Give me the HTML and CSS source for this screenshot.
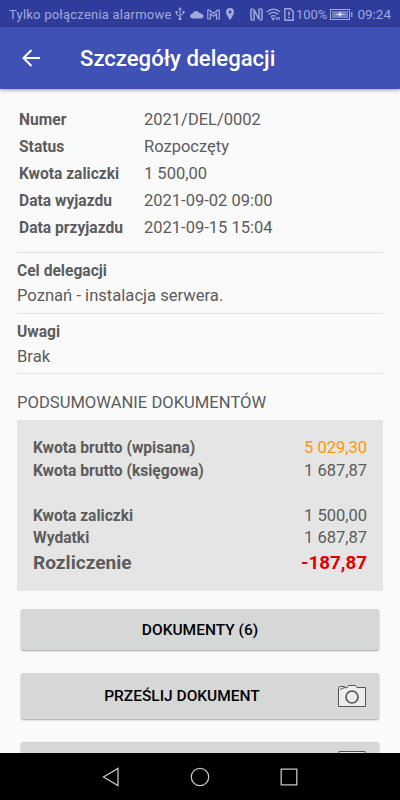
FILE: index.html
```html
<!DOCTYPE html>
<html lang="pl">

<head>
    <meta charset="UTF-8">
    <meta name="viewport" content="width=device-width, initial-scale=1.0">
    <title>Szczegóły delegacji</title>
    <link rel="stylesheet" href="styles.css">
</head>

<body>
    <div class="statusbar">
        <span class="carrier">Tylko połączenia alarmowe</span>
        <svg class="ico-usb" width="10" height="14" viewBox="0 0 10 14" fill="none" stroke="currentColor">
            <path d="M5 2v9M1.500 5v2.500L5 9.500M8.500 5v1.500L5 8.500" />
            <path d="M5 0L3.300 2.800h3.400zM.5 4h2v2h-2zM7.500 4h2v2h-2z" fill="currentColor" stroke="none" />
            <circle cx="5" cy="11.800" r="1.500" fill="currentColor" stroke="none" />
        </svg>
        <svg class="ico-cloud" width="14" height="9" viewBox="0 0 14 9" fill="currentColor">
            <path d="M2.500 8.500a2.400 2.400 0 0 1 0-4.800A3.800 3.800 0 0 1 9.500 3a3 3 0 0 1 2 .8 2.400 2.400 0 0 1 .3 4.700z" />
        </svg>
        <svg class="ico-mail" width="13" height="11" viewBox="0 0 13 11" fill="none" stroke="currentColor" stroke-width="1.200">
            <path d="M.8 10V1.200h1.500L6.500 4.500l4.200-3.300h1.500V10H9.500V5L6.500 7.300 3.500 5v5z" />
        </svg>
        <svg class="ico-pin" width="8" height="12" viewBox="0 0 8 12" fill="currentColor">
            <path fill-rule="evenodd" d="M4 0a4 4 0 0 1 4 4c0 3-4 8-4 8S0 7 0 4a4 4 0 0 1 4-4zm0 2.600a1.400 1.400 0 1 0 0 2.800 1.400 1.400 0 0 0 0-2.800z" />
        </svg>
        <div class="status-right">
            <svg class="ico-nfc" width="13" height="13" viewBox="0 0 13 13" fill="none" stroke="currentColor">
                <path d="M3.200 1H2Q1 1 1 2v9q0 1 1 1h1.200M9.800 1H11q1 0 1 1v9q0 1-1 1H9.800" stroke-width="1.500" />
                <path d="M4 12.500V1.500l5 10V.5" stroke-width="1.500" />
            </svg>
            <svg class="ico-wifi" width="15" height="13" viewBox="0 0 15 13" fill="none" stroke="currentColor" stroke-width="1.300">
                <path d="M.7 4Q7.500-1.800 14.300 4M2.800 6.500Q7.500 2.300 12.200 6.500M4.800 8.800Q7.500 6.600 9.500 8.300" />
                <path d="M6.300 10.500h1.800L7.200 11.700zM10.800 9v3M13 9v3" fill="currentColor" />
            </svg>
            <svg class="ico-sim" width="10" height="13" viewBox="0 0 10 13" fill="none" stroke="currentColor" stroke-width="1.400">
                <path d="M.8.800h5.700L9.200 3.500v8.700H.8z" />
                <path d="M5 3.500v4M5 8.800v1.500" stroke-width="1.600" />
            </svg>
            <span class="percent">100%</span>
            <svg class="ico-battery" width="23" height="11" viewBox="0 0 23 11" fill="none" stroke="currentColor">
                <rect x=".5" y=".5" width="19" height="10" />
                <rect x="2" y="2" width="16" height="7" fill="currentColor" stroke="none" opacity=".6" />
                <path d="M21.800 3v5" stroke-width="1.300" />
                <path d="M5 5.500l4-.9.800-1.800 1.700 1.900 4 .3-4.500 1.100-.8 1.900-1.700-2z" fill="#dfe2f5" stroke="none" />
            </svg>
            <span class="clock">09:24</span>
        </div>
    </div>

    <header class="appbar">
        <svg class="back" width="18" height="18" viewBox="0 0 18 18" fill="none" stroke="#fff" stroke-width="2">
            <path d="M18 9H1.500M9.500 1L1.500 9l8 8" />
        </svg>
        <h1>Szczegóły delegacji</h1>
    </header>

    <main>
        <dl class="details">
            <dt>Numer</dt>
            <dd>2021/DEL/0002</dd>
            <dt>Status</dt>
            <dd>Rozpoczęty</dd>
            <dt>Kwota zaliczki</dt>
            <dd>1 500,00</dd>
            <dt>Data wyjazdu</dt>
            <dd>2021-09-02 09:00</dd>
            <dt>Data przyjazdu</dt>
            <dd>2021-09-15 15:04</dd>
        </dl>

        <section class="note">
            <h2>Cel delegacji</h2>
            <p>Poznań - instalacja serwera.</p>
        </section>
        <section class="note">
            <h2>Uwagi</h2>
            <p>Brak</p>
        </section>

        <h3 class="summary-title">PODSUMOWANIE DOKUMENTÓW</h3>
        <div class="summary">
            <div class="row"><b>Kwota brutto (wpisana)</b><span class="orange">5 029,30</span></div>
            <div class="row"><b>Kwota brutto (księgowa)</b><span>1 687,87</span></div>
            <div class="row gap"><b>Kwota zaliczki</b><span>1 500,00</span></div>
            <div class="row"><b>Wydatki</b><span>1 687,87</span></div>
            <div class="row total"><b>Rozliczenie</b><span>-187,87</span></div>
        </div>

        <button type="button" class="btn">DOKUMENTY (6)</button>
        <button type="button" class="btn btn-photo">
            <span>PRZEŚLIJ DOKUMENT</span>
            <svg width="28" height="22" viewBox="0 0 28 22" fill="#eceeed" stroke="#555">
                <path d="M.5 21.500V2.500L2 1.500h4.500v1.200H9L10.500.5h7L19 2.500h8.500v19z" />
                <path d="M2 4.500L6.500 2.500" fill="none" />
                <circle cx="14" cy="12" r="6" stroke-width="1.700" />
            </svg>
        </button>
        <button type="button" class="btn btn-photo">
            <span></span>
            <svg width="28" height="28" viewBox="0 0 28 28" fill="#eceeed" stroke="#555">
                <path d="M1 .5h26v27H1z" />
            </svg>
        </button>
    </main>

    <nav class="navbar">
        <svg width="18" height="20" viewBox="0 0 18 20"><path d="M16 1.500v17L1.500 10z" /></svg>
        <svg width="20" height="20" viewBox="0 0 20 20"><circle cx="10" cy="10" r="8.700" /></svg>
        <svg width="18" height="18" viewBox="0 0 18 18"><path d="M1.200 1.200h15.600v15.600H1.200z" /></svg>
    </nav>
</body>

</html>
```
FILE: styles.css
```css
* {
    box-sizing: border-box;
}
body {
    margin: 0;
    height: 800px;
    display: flex;
    flex-direction: column;
    overflow: hidden;
    font-family: Roboto, sans-serif;
    font-size: 15.6px;
    color: #5c5c5c;
    background-color: #fafafa;
}
h1, h2, h3, p, dl, dd {
    margin: 0;
}
.statusbar {
    flex: none;
    height: 27px;
    display: flex;
    align-items: center;
    padding: 1px 9px 0;
    font-size: 13px;
    color: #a0a8dc;
    background-color: #303c9b;
}
.statusbar svg {
    flex: none;
}
.carrier {
    width: 162px;
    white-space: nowrap;
    letter-spacing: 0.22px;
}
.ico-usb {
    margin-left: 4px;
}
.ico-cloud {
    margin-left: 5px;
}
.ico-mail {
    margin-left: 3px;
}
.ico-pin {
    margin-left: 6px;
}
.status-right {
    display: flex;
    align-items: center;
    margin-left: auto;
}
.ico-wifi {
    margin-left: 3px;
}
.ico-sim {
    margin: 0 2px 0 3px;
}
.ico-battery {
    margin: 0 4px 0 3px;
}
.clock {
    font-size: 13.5px;
}
.appbar {
    flex: none;
    z-index: 1;
    height: 62px;
    display: flex;
    align-items: center;
    padding-left: 22px;
    background-color: #3f51b5;
    box-shadow: 0 1px 4px rgba(0, 0, 0, 0.4);
}
.appbar h1 {
    margin-left: 40px;
    font-size: 22.1px;
    font-weight: 500;
    line-height: 30px;
    color: #fff;
}
main {
    flex: 1;
    min-height: 0;
    overflow: hidden;
    padding: 17px 17px 0;
}
.details {
    display: grid;
    grid-template-columns: 125px 1fr;
    grid-auto-rows: 27px;
    line-height: 27px;
    padding: 0 2px;
    margin-bottom: 11px;
}
.details dt {
    padding-top: 1px;
    font-weight: 700;
}
.details dd {
    font-size: 16.5px;
}
.note {
    height: 60.5px;
    padding-top: 6px;
    border-top: 1px solid #e2e2e2;
}
.note h2 {
    font-size: 15.6px;
    line-height: 25px;
}
.note p {
    font-size: 16.6px;
    line-height: 24px;
}
.summary-title {
    padding-top: 17px;
    border-top: 1px solid #e2e2e2;
    font-size: 16.6px;
    font-weight: 400;
    line-height: 24px;
}
.summary {
    height: 171px;
    margin-top: 5px;
    padding: 17px 16px;
    background-color: #e5e5e5;
}
.row {
    display: flex;
    justify-content: space-between;
    line-height: 22.5px;
}
.row span {
    font-size: 16.5px;
}
.row.gap {
    margin-top: 22.5px;
}
.row .orange {
    color: #ff9800;
}
.row.total {
    line-height: 26px;
    font-size: 19.1px;
}
.row.total span {
    font-size: 18.8px;
    font-weight: 700;
    color: #e00000;
}
.btn {
    display: block;
    width: 358px;
    height: 41px;
    margin: 18px 0 0 4px;
    padding: 0;
    border: none;
    border-radius: 2px;
    font: 500 15.5px Roboto, sans-serif;
    color: #000;
    background-color: #d6d7d7;
    box-shadow: 0 1px 2px rgba(0, 0, 0, 0.35);
}
.btn-photo {
    display: flex;
    align-items: center;
    height: 46px;
    margin-top: 23px;
    padding-right: 13px;
}
.btn-photo span {
    flex: 1;
    padding-left: 5px;
}
.navbar {
    flex: none;
    height: 47px;
    display: flex;
    align-items: center;
    justify-content: center;
    gap: 70px;
    background-color: #000;
}
.navbar svg {
    fill: none;
    stroke: #c4c4c4;
    stroke-width: 1.3;
}
```
